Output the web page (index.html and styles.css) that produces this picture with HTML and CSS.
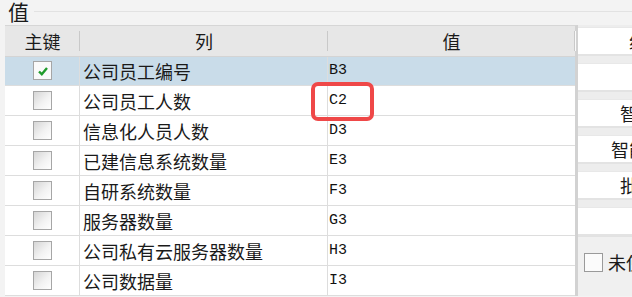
FILE: index.html
```html
<!DOCTYPE html>
<html lang="zh-CN">
<head>
  <meta charset="UTF-8" />
  <title>值</title>
  <link rel="stylesheet" href="styles.css">
</head>
<body>
  <div class="group-title">
    <span class="legend">值</span>
    <span class="legend-line"></span>
  </div>

  <div class="main">
    <div class="grid-wrap">
      <div class="grid">
        <div class="hcell">主键</div>
        <div class="hcell">列</div>
        <div class="hcell">值</div>

        <div class="row selected">
          <div class="cell center"><span class="check on"><svg viewBox="0 0 12 12" width="12" height="12"><path d="M2 6.5 L4.8 9.2 L10 3" fill="none" stroke="#1f9b2b" stroke-width="2.4"/></svg></span></div>
          <div class="cell name">公司员工编号</div>
          <div class="cell value">B3</div>
        </div>
        <div class="row">
          <div class="cell center"><span class="check"></span></div>
          <div class="cell name">公司员工人数</div>
          <div class="cell value">C2</div>
        </div>
        <div class="row">
          <div class="cell center"><span class="check"></span></div>
          <div class="cell name">信息化人员人数</div>
          <div class="cell value">D3</div>
        </div>
        <div class="row">
          <div class="cell center"><span class="check"></span></div>
          <div class="cell name">已建信息系统数量</div>
          <div class="cell value">E3</div>
        </div>
        <div class="row">
          <div class="cell center"><span class="check"></span></div>
          <div class="cell name">自研系统数量</div>
          <div class="cell value">F3</div>
        </div>
        <div class="row">
          <div class="cell center"><span class="check"></span></div>
          <div class="cell name">服务器数量</div>
          <div class="cell value">G3</div>
        </div>
        <div class="row">
          <div class="cell center"><span class="check"></span></div>
          <div class="cell name">公司私有云服务器数量</div>
          <div class="cell value">H3</div>
        </div>
        <div class="row">
          <div class="cell center"><span class="check"></span></div>
          <div class="cell name">公司数据量</div>
          <div class="cell value">I3</div>
        </div>
      </div>
      <!-- 标注框 -->
      <div class="mark"></div>
    </div>

    <div class="side">
      <div class="btn">组</div>
      <div class="btn"></div>
      <div class="btn">智能</div>
      <div class="btn">智能化</div>
      <div class="btn">批量</div>
      <div class="btn"></div>
      <div class="side-bottom">
        <label class="opt"><span class="box"></span>未使用</label>
      </div>
    </div>
  </div>
</body>
</html>
```

FILE: styles.css
```css
body {
  margin: 0;
  width: 632px;
  height: 297px;
  overflow: hidden;
  background: #f3f3f3;
  font-family: "Noto Sans CJK SC", sans-serif;
  color: #1a1a1a;
}
.group-title {
  display: flex;
  align-items: center;
  height: 25px;
  padding-left: 8px;
}
.legend {
  font-size: 21px;
  line-height: 21px;
  margin-top: -3px;
  padding-right: 5px;
}
.legend-line {
  flex: 1;
  height: 1px;
  margin-top: -3px;
  background: #e2e2e2;
}
.main {
  display: flex;
  padding-left: 5px;
}
.grid-wrap {
  position: relative;
  width: 570px;
  border-top: 1px solid #d6d6d6;
  border-right: 3px solid #d2d2d2;
  background: #fff;
}
.grid {
  display: grid;
  grid-template-columns: 75px 248px 247px;
  grid-auto-rows: 30px;
}
.row {
  display: contents;
}
.hcell {
  position: relative;
  display: flex;
  align-items: center;
  justify-content: center;
  height: 30px;
  background: #e7e7e7;
  border-bottom: 1px solid #d4d4d4;
  font-size: 18px;
}
.hcell:not(:last-child)::after {
  content: "";
  position: absolute;
  right: 0;
  top: 5px;
  bottom: 5px;
  width: 1px;
  background: #c9c9c9;
  box-shadow: 1px 0 0 #fafafa;
}
.hcell:last-child::after {
  content: "";
  position: absolute;
  right: 1px;
  top: 5px;
  bottom: 5px;
  width: 1px;
  background: #c9c9c9;
}
.cell {
  display: flex;
  align-items: center;
  border-bottom: 1px solid #dddddd;
  border-right: 1px solid #dddddd;
  font-size: 18px;
  overflow: hidden;
  white-space: nowrap;
}
.cell.center {
  justify-content: center;
}
.cell.name {
  padding-left: 3px;
}
.cell.value {
  padding-left: 1px;
  font-family: "Liberation Mono", monospace;
  font-size: 15px;
  color: #111;
  border-right: none;
}
.row.selected .cell {
  background: #c9dce9;
}
.check {
  display: flex;
  align-items: center;
  justify-content: center;
  width: 17px;
  height: 17px;
  margin-left: 1px;
  border: 1px solid #a6a6a6;
  background: linear-gradient(135deg, #d6d6d6 0%, #f2f2f2 55%, #ffffff 100%);
}
.check.on {
  background: #fafafa;
}
.mark {
  position: absolute;
  left: 306px;
  top: 56px;
  width: 55px;
  height: 31px;
  border: 4px solid #ef4848;
  border-radius: 7px;
}
.side {
  flex: 1;
  display: flex;
  flex-direction: column;
  gap: 9px;
  padding-top: 2px;
  background: #ededed;
  min-width: 0;
}
.btn {
  width: 120px;
  height: 26px;
  display: flex;
  align-items: center;
  justify-content: center;
  background: #fff;
  border-top: 1px solid #e8e8e8;
  font-size: 18px;
  white-space: nowrap;
  box-shadow: 0 2px 0 #e3e3e3;
}
.side-bottom {
  flex: 1;
  margin-top: -7px;
  padding: 12px 0 0 6px;
  background: #f0f0f0;
  border-top: 1px solid #e2e2e2;
}
.opt {
  display: flex;
  align-items: center;
  gap: 5px;
  font-size: 18px;
  white-space: nowrap;
}
.box {
  flex: none;
  width: 17px;
  height: 17px;
  border: 1px solid #9a9a9a;
  background: #fbfbfb;
}
```
